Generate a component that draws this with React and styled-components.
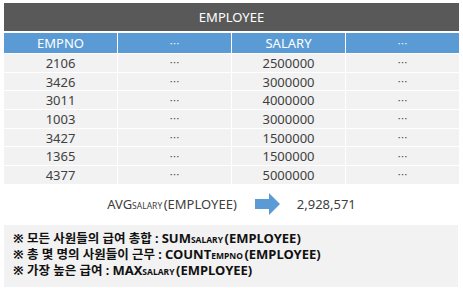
import React from "react"
import styled, { createGlobalStyle } from "styled-components"

const GlobalStyle = createGlobalStyle`
  body {
    margin: 0;
    background: #ffffff;
    font-family: "Noto Sans", "Noto Sans CJK KR", sans-serif;
  }
`

const Page = styled.div`
  width: 463px;
  height: 288px;
  padding: 3px 4px 0;
  box-sizing: border-box;
  display: flex;
  flex-direction: column;
`

const TitleBar = styled.div`
  height: 28px;
  background: #595959;
  color: #ffffff;
  font-size: 13px;
  display: flex;
  align-items: center;
  justify-content: center;
`

const Table = styled.div`
  margin-top: 2px;
  display: grid;
  grid-template-columns: repeat(4, 1fr);
  grid-auto-rows: 17.7px;
  grid-template-rows: 20px;
  gap: 1px;
  background: #ffffff;
`

const Cell = styled.div`
  display: flex;
  align-items: center;
  justify-content: center;
  font-size: ${(p) => (p.$dots ? "10px" : "13px")};
  background: ${(p) => (p.$head ? "#5b9bd5" : "#f2f2f2")};
  color: ${(p) => (p.$head ? "#ffffff" : "#404040")};
`

const AvgRow = styled.div`
  height: 41px;
  display: flex;
  align-items: center;
  justify-content: center;
  font-size: 13px;
  color: #404040;
`

const Formula = styled.span`
  white-space: nowrap;
`

const Sub = styled.span`
  font-size: 8.5px;
  margin-right: 1.5px;
`

const Arrow = styled.svg`
  margin: 0 17px 0 18px;
  flex: none;
`

const Note = styled.div`
  background: #f2f2f2;
  width: 454px;
  padding: 6px 9px 8px;
  box-sizing: border-box;
  font-size: 13px;
  font-weight: 700;
  line-height: 15px;
  color: #111111;
`

const NoteLine = styled.div`
  white-space: nowrap;
`

const Ko = styled.span`
  font-size: 12.5px;
`

const rows = [
  ["2106", "2500000"],
  ["3426", "3000000"],
  ["3011", "4000000"],
  ["1003", "3000000"],
  ["3427", "1500000"],
  ["1365", "1500000"],
  ["4377", "5000000"],
]

const notes = [
  ["※ 모든 사원들의 급여 총합 : ", "SUM", "SALARY"],
  ["※ 총 몇 명의 사원들이 근무 : ", "COUNT", "EMPNO"],
  ["※ 가장 높은 급여 : ", "MAX", "SALARY"],
]

const App = () => {
  return (
    <Page>
      <GlobalStyle />
      <TitleBar>EMPLOYEE</TitleBar>
      <Table>
        <Cell $head>EMPNO</Cell>
        <Cell $head $dots>⋯</Cell>
        <Cell $head>SALARY</Cell>
        <Cell $head $dots>⋯</Cell>
        {rows.map(([no, sal]) => (
          <React.Fragment key={no}>
            <Cell>{no}</Cell>
            <Cell $dots>⋯</Cell>
            <Cell>{sal}</Cell>
            <Cell $dots>⋯</Cell>
          </React.Fragment>
        ))}
      </Table>
      <AvgRow>
        <Formula>
          AVG<Sub>SALARY</Sub>(EMPLOYEE)
        </Formula>
        <Arrow width="25" height="22" viewBox="0 0 25 22">
          <path d="M0 6 H14 V0 L25 11 L14 22 V16 H0 Z" fill="#5b9bd5" />
        </Arrow>
        <span>2,928,571</span>
      </AvgRow>
      <Note>
        {notes.map(([ko, fn, sub]) => (
          <NoteLine key={fn}>
            <Ko>{ko}</Ko>
            {fn}
            <Sub>{sub}</Sub>(EMPLOYEE)
          </NoteLine>
        ))}
      </Note>
    </Page>
  )
}

export default App
